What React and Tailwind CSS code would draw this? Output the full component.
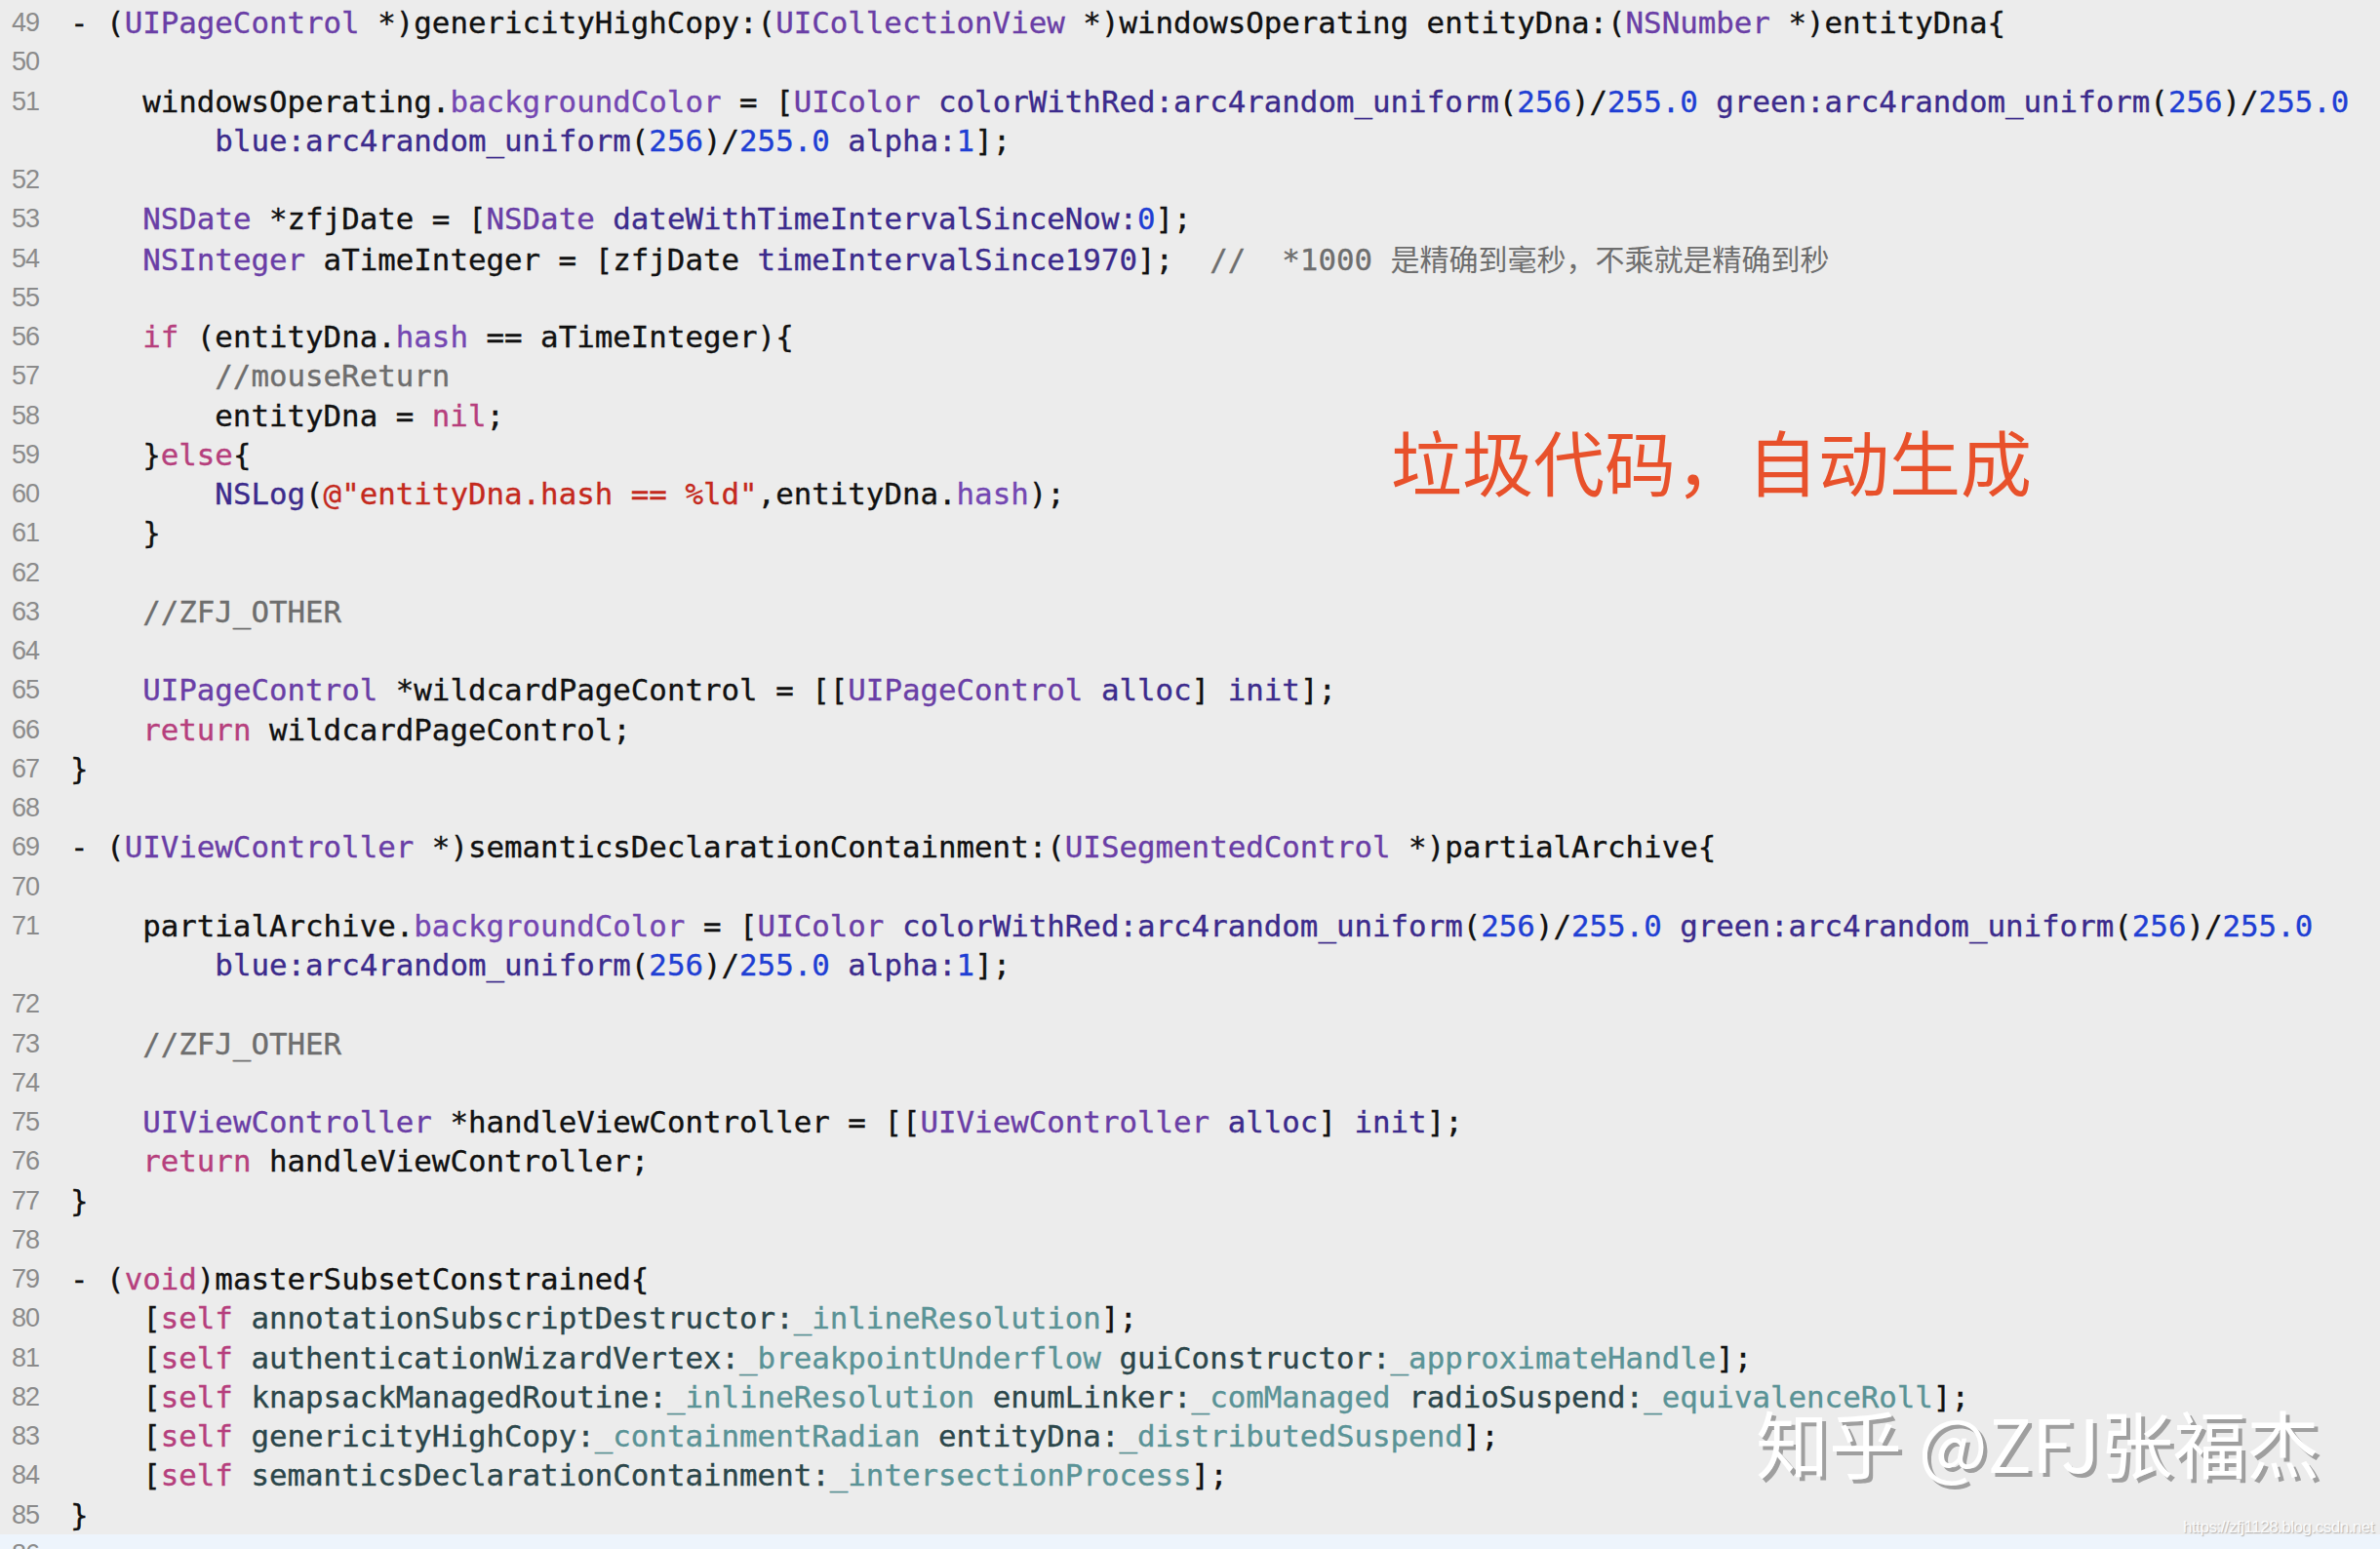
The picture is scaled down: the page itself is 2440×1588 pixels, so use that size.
const C = {
  p: "text-[#111111]",
  t: "text-[#6a3ea6]",
  pr: "text-[#7447b2]",
  m: "text-[#3c2b8c]",
  n: "text-[#1f3fd4]",
  k: "text-[#b63f7d]",
  s: "text-[#c4291d]",
  c: "text-[#6e6e6e]",
  pm: "text-[#2b464a]",
  iv: "text-[#5a9396]",
};

const colorLine = (lead) => [
  ["p", lead],
  ["pr", "backgroundColor"],
  ["p", " = ["],
  ["t", "UIColor"],
  ["p", " "],
  ["m", "colorWithRed:arc4random_uniform"],
  ["p", "("],
  ["n", "256"],
  ["p", ")/"],
  ["n", "255.0"],
  ["p", " "],
  ["m", "green:arc4random_uniform"],
  ["p", "("],
  ["n", "256"],
  ["p", ")/"],
  ["n", "255.0"],
];

const colorCont = [
  ["p", "        "],
  ["m", "blue:arc4random_uniform"],
  ["p", "("],
  ["n", "256"],
  ["p", ")/"],
  ["n", "255.0"],
  ["p", " "],
  ["m", "alpha:"],
  ["n", "1"],
  ["p", "];"],
];

// [lineNumber | null, tokens]
const rows = [
  [49, [["p", "- ("], ["t", "UIPageControl"], ["p", " *)genericityHighCopy:("], ["t", "UICollectionView"], ["p", " *)windowsOperating entityDna:("], ["t", "NSNumber"], ["p", " *)entityDna{"]]],
  [50, []],
  [51, colorLine("    windowsOperating.")],
  [null, colorCont],
  [52, []],
  [53, [["p", "    "], ["t", "NSDate"], ["p", " *zfjDate = ["], ["t", "NSDate"], ["p", " "], ["m", "dateWithTimeIntervalSinceNow:"], ["n", "0"], ["p", "];"]]],
  [54, [["p", "    "], ["t", "NSInteger"], ["p", " aTimeInteger = [zfjDate "], ["m", "timeIntervalSince1970"], ["p", "];  "], ["c", "//  *1000 "], ["cj", "是精确到毫秒，不乘就是精确到秒"]]],
  [55, []],
  [56, [["p", "    "], ["k", "if"], ["p", " (entityDna."], ["pr", "hash"], ["p", " == aTimeInteger){"]]],
  [57, [["c", "        //mouseReturn"]]],
  [58, [["p", "        entityDna = "], ["k", "nil"], ["p", ";"]]],
  [59, [["p", "    }"], ["k", "else"], ["p", "{"]]],
  [60, [["p", "        "], ["m", "NSLog"], ["p", "("], ["s", "@\"entityDna.hash == %ld\""], ["p", ",entityDna."], ["pr", "hash"], ["p", ");"]]],
  [61, [["p", "    }"]]],
  [62, []],
  [63, [["c", "    //ZFJ_OTHER"]]],
  [64, []],
  [65, [["p", "    "], ["t", "UIPageControl"], ["p", " *wildcardPageControl = [["], ["t", "UIPageControl"], ["p", " "], ["m", "alloc"], ["p", "] "], ["m", "init"], ["p", "];"]]],
  [66, [["p", "    "], ["k", "return"], ["p", " wildcardPageControl;"]]],
  [67, [["p", "}"]]],
  [68, []],
  [69, [["p", "- ("], ["t", "UIViewController"], ["p", " *)semanticsDeclarationContainment:("], ["t", "UISegmentedControl"], ["p", " *)partialArchive{"]]],
  [70, []],
  [71, colorLine("    partialArchive.")],
  [null, colorCont],
  [72, []],
  [73, [["c", "    //ZFJ_OTHER"]]],
  [74, []],
  [75, [["p", "    "], ["t", "UIViewController"], ["p", " *handleViewController = [["], ["t", "UIViewController"], ["p", " "], ["m", "alloc"], ["p", "] "], ["m", "init"], ["p", "];"]]],
  [76, [["p", "    "], ["k", "return"], ["p", " handleViewController;"]]],
  [77, [["p", "}"]]],
  [78, []],
  [79, [["p", "- ("], ["k", "void"], ["p", ")masterSubsetConstrained{"]]],
  [80, [["p", "    ["], ["k", "self"], ["p", " "], ["pm", "annotationSubscriptDestructor:"], ["iv", "_inlineResolution"], ["p", "];"]]],
  [81, [["p", "    ["], ["k", "self"], ["p", " "], ["pm", "authenticationWizardVertex:"], ["iv", "_breakpointUnderflow"], ["p", " "], ["pm", "guiConstructor:"], ["iv", "_approximateHandle"], ["p", "];"]]],
  [82, [["p", "    ["], ["k", "self"], ["p", " "], ["pm", "knapsackManagedRoutine:"], ["iv", "_inlineResolution"], ["p", " "], ["pm", "enumLinker:"], ["iv", "_comManaged"], ["p", " "], ["pm", "radioSuspend:"], ["iv", "_equivalenceRoll"], ["p", "];"]]],
  [83, [["p", "    ["], ["k", "self"], ["p", " "], ["pm", "genericityHighCopy:"], ["iv", "_containmentRadian"], ["p", " "], ["pm", "entityDna:"], ["iv", "_distributedSuspend"], ["p", "];"]]],
  [84, [["p", "    ["], ["k", "self"], ["p", " "], ["pm", "semanticsDeclarationContainment:"], ["iv", "_intersectionProcess"], ["p", "];"]]],
  [85, [["p", "}"]]],
];

function Token({ kind, text }) {
  if (kind === "cj") {
    return <span className="text-[#6e6e6e] text-[30px] font-['Noto_Sans_CJK_SC',sans-serif] [-webkit-text-stroke:0px]">{text}</span>;
  }
  return <span className={C[kind]}>{text}</span>;
}

function Row({ num, tokens, current }) {
  return (
    <div className={`flex h-[40.26px] items-center ${current ? "bg-[#edf4fc]" : ""}`}>
      <div className="w-[40px] shrink-0 text-right text-[27px] tracking-[-1px] text-[#8b8b8b] font-['Liberation_Sans',sans-serif] [-webkit-text-stroke:0px]">
        {num ?? ""}
      </div>
      <div className="pl-[32px] whitespace-pre">
        {tokens.map(([k, t], i) => (
          <Token key={i} kind={k} text={t} />
        ))}
      </div>
    </div>
  );
}

export default function App() {
  return (
    <div className="relative w-[2440px] h-[1588px] overflow-hidden bg-[#ececec]">
      <div className="pt-[3px] font-['DejaVu_Sans_Mono','Noto_Sans_CJK_SC',monospace] text-[30.8px] leading-[40.26px] [-webkit-text-stroke:0.35px]">
        {rows.map(([num, tokens], i) => (
          <Row key={i} num={num} tokens={tokens} />
        ))}
        <Row num={86} tokens={[]} current />
      </div>

      <div className="absolute left-[1426px] top-[435px] text-[73px] leading-none text-[#e8512b] font-['Noto_Sans_CJK_SC',sans-serif] whitespace-nowrap">
        垃圾代码，自动生成
      </div>

      <div className="absolute left-[1800px] top-[1440px] text-[75px] leading-none text-white font-['Noto_Sans_CJK_SC',sans-serif] whitespace-nowrap [text-shadow:4px_4px_0_#9f9f9f]">
        知乎 @ZFJ张福杰
      </div>

      <div className="absolute right-[6px] top-[1557px] text-[17px] leading-none tracking-[-0.5px] text-white/90 font-['Liberation_Sans',sans-serif] [text-shadow:1px_1px_1px_#b0b0b0]">
        https://zfj1128.blog.csdn.net
      </div>
    </div>
  );
}
